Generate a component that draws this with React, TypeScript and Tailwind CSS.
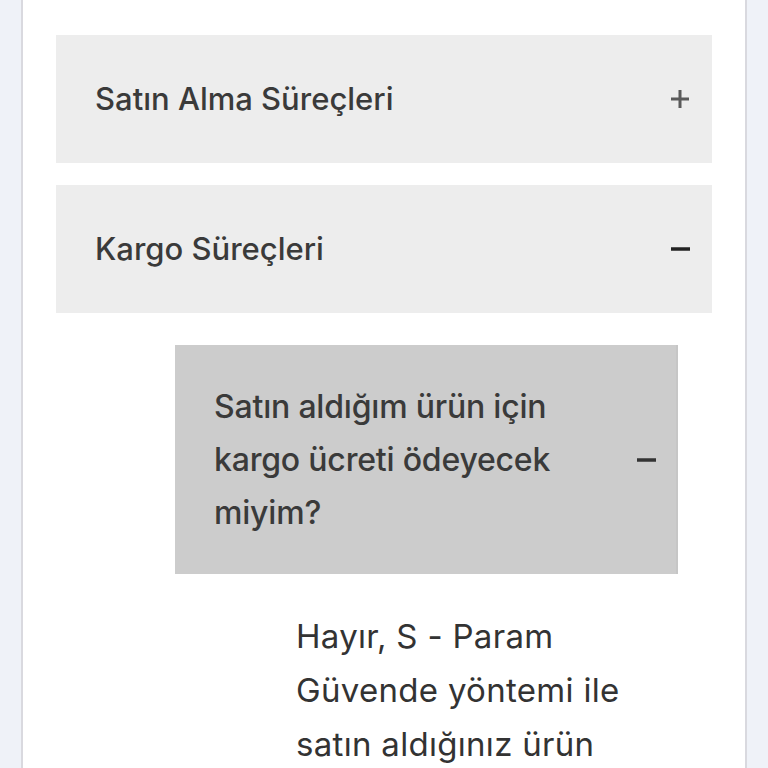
import { useState } from "react";

function Plus() {
  return (
    <svg width="20" height="20" viewBox="0 0 20 20" className="shrink-0">
      <path d="M10 1v18M1 10h18" stroke="#5a5a5a" strokeWidth="3" />
    </svg>
  );
}

function Minus({ color = "#222" }: { color?: string }) {
  return (
    <svg width="19" height="20" viewBox="0 0 19 20" className="shrink-0">
      <path d="M0 10h19" stroke={color} strokeWidth="3.5" />
    </svg>
  );
}

export default function App() {
  const [open, setOpen] = useState<string | null>("kargo");

  return (
    <div
      className="flex min-h-screen w-full bg-[#eff2f8] px-[21px]"
      style={{ fontFamily: "Inter, Roboto, 'Liberation Sans', sans-serif" }}
    >
      <div className="flex-1 border-x-2 border-[#d9d9df] bg-white px-[33px] pt-[35px]">
        {/* Satın Alma */}
        <button
          onClick={() => setOpen(open === "satin" ? null : "satin")}
          className="flex h-[128px] w-full items-center justify-between bg-[#ededed] pl-[39px] pr-[22px] text-left"
        >
          <span className="text-[31px] font-medium text-[#3a3a3a]">Satın Alma Süreçleri</span>
          <Plus />
        </button>

        {/* Kargo */}
        <button
          onClick={() => setOpen(open === "kargo" ? null : "kargo")}
          className="mt-[22px] flex h-[128px] w-full items-center justify-between bg-[#ededed] pl-[39px] pr-[22px] text-left"
        >
          <span className="text-[31px] font-medium text-[#3a3a3a]">Kargo Süreçleri</span>
          <Minus />
        </button>

        {open === "kargo" && (
          <div className="pl-[119px] pr-[34px] pt-[32px]">
            <div className="flex h-[229px] items-center justify-between border-r-2 border-[#c6c6c6] bg-[#cccccc] pl-[39px] pr-[20px]">
              <p className="w-[380px] text-[32px] font-medium leading-[53px] tracking-[-0.2px] text-[#3a3a3a]">
                Satın aldığım ürün için kargo ücreti ödeyecek miyim?
              </p>
              <Minus color="#333" />
            </div>
            <p className="ml-[121px] w-[335px] pt-[35px] text-[33px] leading-[54px] tracking-[0.3px] text-[#333]">
              Hayır, S - Param Güvende yöntemi ile satın aldığınız ürün için kargo ücreti
              ödemezsiniz.
            </p>
          </div>
        )}
      </div>
    </div>
  );
}
